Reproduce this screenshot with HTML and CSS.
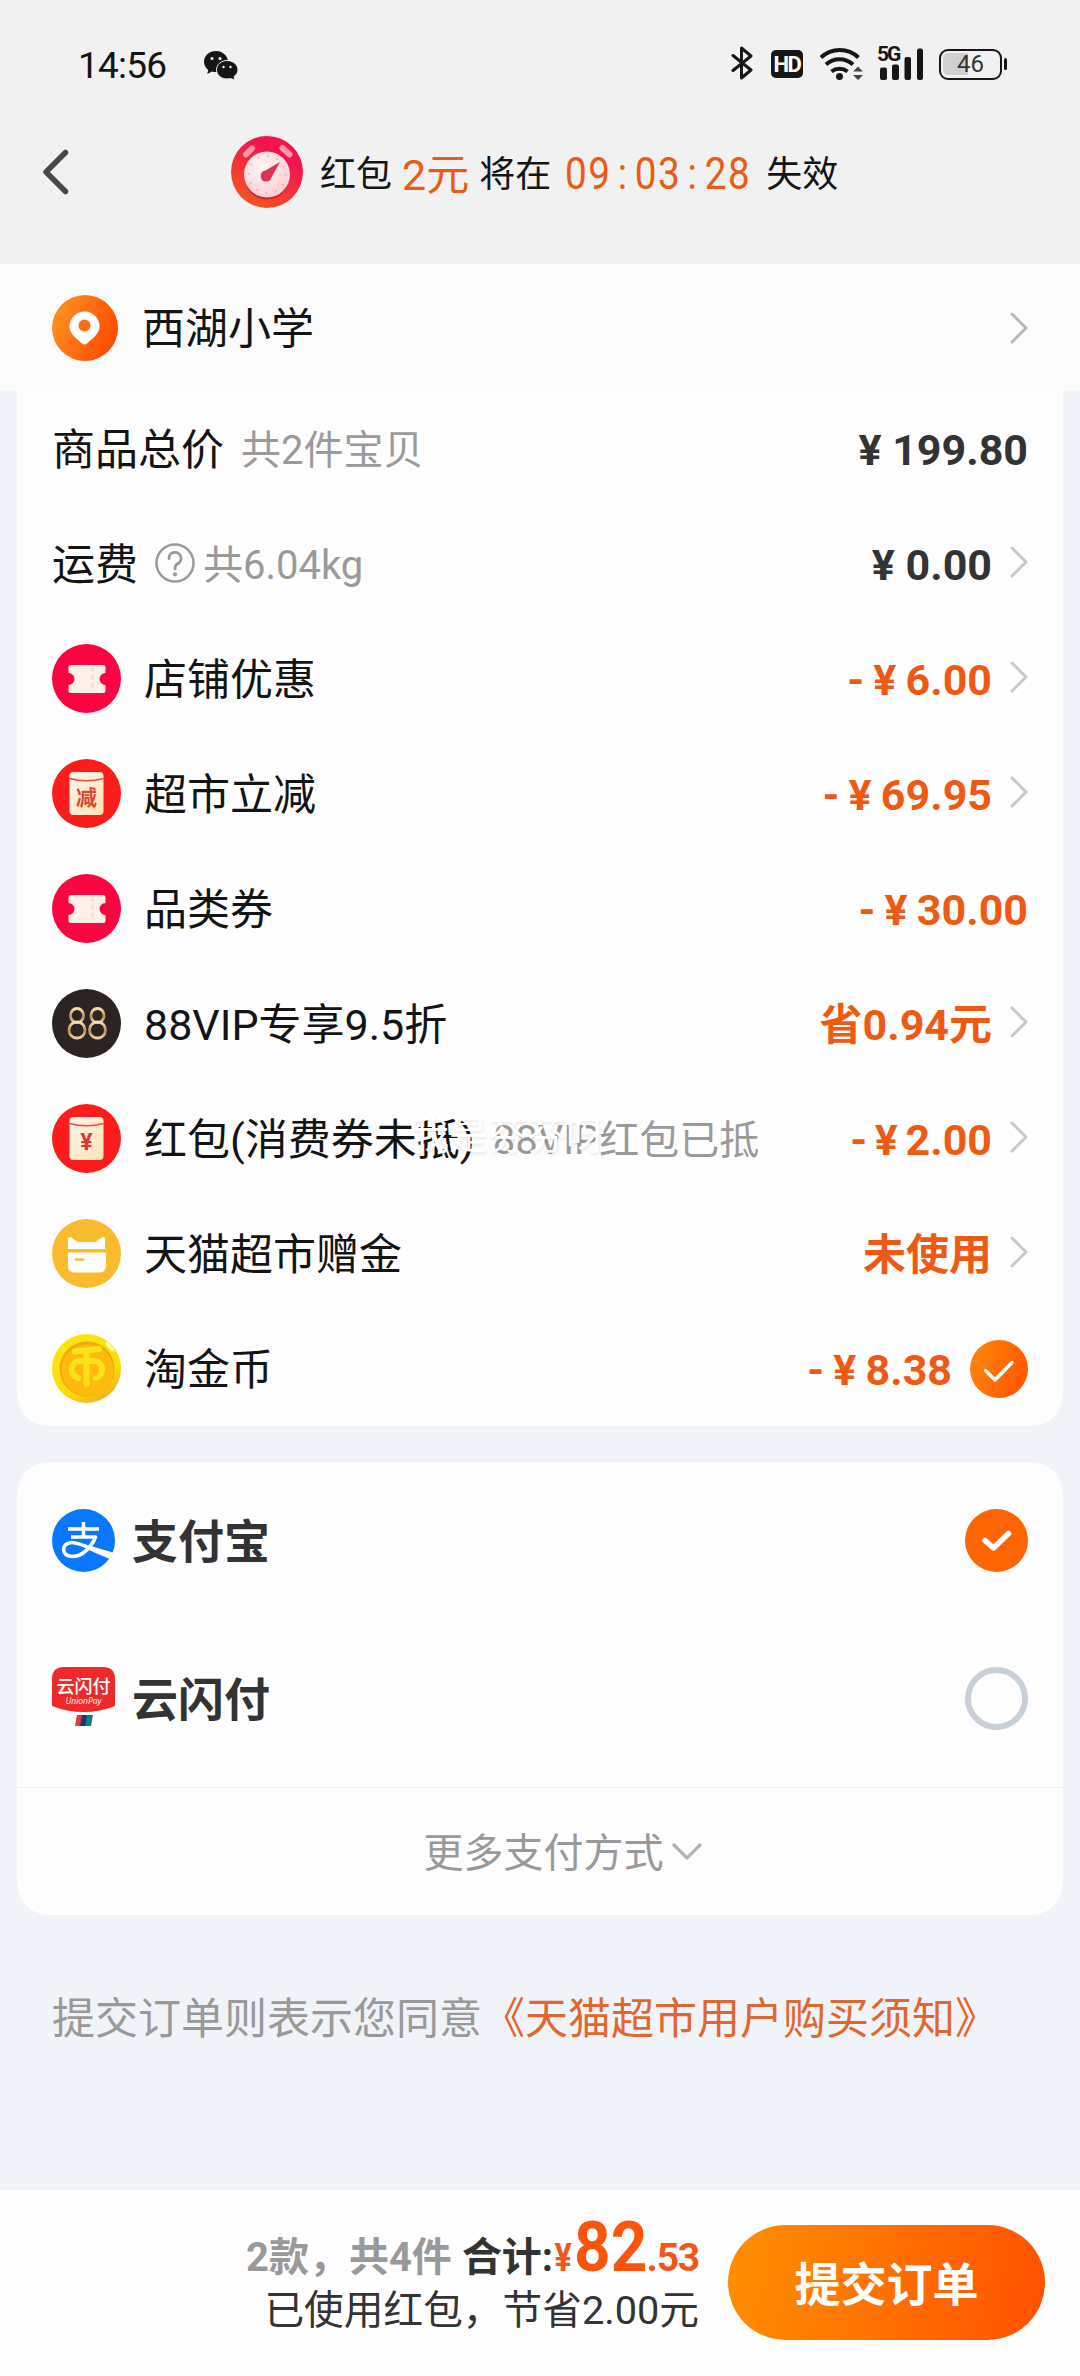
FILE: index.html
```html
<!DOCTYPE html>
<html lang="zh-CN">
<head>
<meta charset="utf-8">
<title>确认订单</title>
<link rel="stylesheet" href="styles.css">
</head>
<body>
<svg class="defs" width="0" height="0" aria-hidden="true">
  <defs>
    <linearGradient id="gOrange" x1="0" y1="0.2" x2="1" y2="0.6"><stop offset="0" stop-color="#ff9422"/><stop offset="1" stop-color="#ff4a00"/></linearGradient>
    <linearGradient id="gCheck" x1="0" y1="0" x2="1" y2="0.4"><stop offset="0" stop-color="#ff8a0a"/><stop offset="1" stop-color="#ff5a00"/></linearGradient>
    <linearGradient id="gClock" x1="0.75" y1="0.1" x2="0.25" y2="1"><stop offset="0.2" stop-color="#f1154c"/><stop offset="1" stop-color="#f4591f"/></linearGradient>
    <radialGradient id="gFace" cx="0.4" cy="0.35" r="0.7"><stop offset="0" stop-color="#fff6f4"/><stop offset="1" stop-color="#fbccd2"/></radialGradient>
    <linearGradient id="gPaper" x1="0" y1="0" x2="1" y2="1"><stop offset="0" stop-color="#fff4ea"/><stop offset="1" stop-color="#fde3b4"/></linearGradient>
    <linearGradient id="gGold" x1="0" y1="0" x2="0.6" y2="1"><stop offset="0" stop-color="#fae80a"/><stop offset="0.75" stop-color="#fbdc0a"/><stop offset="1" stop-color="#f5b41c"/></linearGradient>
    <linearGradient id="gVip" x1="0" y1="0" x2="0" y2="1"><stop offset="0" stop-color="#f6dfb8"/><stop offset="0.55" stop-color="#b98f5a"/><stop offset="1" stop-color="#ecd0a2"/></linearGradient>
  </defs>
  <symbol id="chev" viewBox="0 0 18 32"><path d="M2 2 L16 16 L2 30" fill="none" stroke="currentColor" stroke-width="3" stroke-linecap="round" stroke-linejoin="round"/></symbol>
  <symbol id="coupon" viewBox="0 0 69 69">
    <circle cx="34.5" cy="34.5" r="34.5" fill="#fb0540"/>
    <path d="M19 21H51a2.5 2.5 0 0 1 2.5 2.5V29a6 6 0 0 0 0 12V46.500a2.500 2.500 0 0 1-2.500 2.500H19a2.500 2.500 0 0 1-2.500-2.500V41a6 6 0 0 0 0-12V23.500A2.500 2.500 0 0 1 19 21Z" fill="#fff0ea"/>
    <path d="M40.500 23V47" stroke="#fcdcd5" stroke-width="3" stroke-dasharray="5 3"/>
  </symbol>
  <symbol id="packet" viewBox="0 0 69 69">
    <circle cx="34.500" cy="34.500" r="34.500" fill="#fb1d1b"/>
    <rect x="17.500" y="13" width="34" height="43" rx="4" fill="url(#gPaper)"/>
    <path d="M17.500 19.500Q34.500 24 51.500 19.500" fill="none" stroke="#f0483c" stroke-width="1.500"/>
  </symbol>
</svg>

<header class="top">
  <div class="status">
    <span class="time">14:56</span>
    <svg class="wechat" width="34" height="29" viewBox="0 0 34 29" fill="#161616">
      <path d="M12 0C5.400 0 0 4.700 0 10.700c0 3.500 1.800 6.400 4.300 8.300L3.200 23l4.700-2.600c1.300.4 2.700.5 4.100.5 6.600 0 12-4.500 12-10.200S18.600 0 12 0Z"/>
      <path d="M23 9.500c-6 0-10.500 4.200-10.500 9.300S17 28 23 28c1.300 0 2.400-.2 3.500-.5L31 29l-1-3.400c2.400-1.700 4-4 4-6.800 0-5.100-5-9.300-11-9.300Z" stroke="#f1f1f1" stroke-width="1"/>
      <g fill="#f1f1f1"><circle cx="8" cy="7.500" r="1.500"/><circle cx="16" cy="7.500" r="1.500"/><circle cx="19.500" cy="16" r="1.200"/><circle cx="26.500" cy="16" r="1.200"/></g>
    </svg>
    <div class="sys">
      <svg width="22" height="34" viewBox="0 0 22 34"><path d="M2 9.500L20 24L10.500 32V2L20 10L2 24.500" fill="none" stroke="#161616" stroke-width="3" stroke-linejoin="round" stroke-linecap="round"/></svg>
      <span class="hd">HD</span>
      <svg class="wifi" width="46" height="34" viewBox="0 0 46 34"><g fill="none" stroke="#161616" stroke-width="4"><path d="M2 11.500A27 27 0 0 1 39.500 11.500"/><path d="M7 18.500A20 20 0 0 1 34 18.500"/><path d="M12.500 25.500A13 13 0 0 1 28.500 25.500"/></g><circle cx="20.500" cy="30.500" r="3.500" fill="#161616"/><path d="M34 25.500L39 20.500L44 25.500ZM34 29L39 34L44 29Z" fill="#444"/></svg>
      <svg class="signal" width="48" height="34" viewBox="0 0 48 34"><text x="0" y="15" class="g5">5G</text><g fill="#161616"><rect x="3" y="21.500" width="7" height="12.500" rx="2"/><rect x="15" y="18.500" width="7" height="15.500" rx="2"/><rect x="27.500" y="11" width="6.500" height="23" rx="2"/><rect x="40" y="2.500" width="6" height="31.500" rx="2"/></g></svg>
      <span class="battery"><span class="level">46</span></span>
    </div>
  </div>
  <div class="notice">
    <svg class="back" width="28" height="46" viewBox="0 0 28 46"><path d="M23.500 3.500L4 23L23.500 42.500" fill="none" stroke="#48484a" stroke-width="5.500" stroke-linecap="round" stroke-linejoin="round"/></svg>
    <svg class="clock" width="72" height="72" viewBox="0 0 72 72">
      <circle cx="36" cy="36" r="36" fill="url(#gClock)"/>
      <g stroke="#fb94a6" stroke-width="6" stroke-linecap="round"><path d="M15 18.500L21 12.500"/><path d="M51.500 12L58.500 18.500"/></g>
      <circle cx="36" cy="41" r="22.500" fill="#c9252b"/>
      <circle cx="36" cy="38.500" r="23" fill="url(#gFace)"/>
      <circle cx="36" cy="38.500" r="18.500" fill="none" stroke="#ef9aa6" stroke-width="2" stroke-dasharray="1 8.690"/>
      <path d="M49 26L40.500 41.500A5.500 5.500 0 1 1 34.500 34.500Z" fill="#dc3350"/>
    </svg>
    <span class="n-text">红包</span><span class="n-amt">2元</span><span class="n-text">将在</span><span class="timer">09<i>:</i>03<i>:</i>28</span><span class="n-text">失效</span>
  </div>
</header>

<section class="address">
  <svg width="66" height="66" viewBox="0 0 66 66"><circle cx="33" cy="33" r="33" fill="url(#gOrange)"/><path d="M32.500 16.500a15 15 0 0 0-15 15c0 8 8.500 13 12.500 17q2.500 2 5 0c4-4 12.500-9 12.500-17a15 15 0 0 0-15-15Z" fill="#fff"/><circle cx="32.500" cy="30.500" r="6" fill="#ff6f12"/></svg>
  <span class="label">西湖小学</span>
  <svg class="chev strong" width="18" height="32"><use href="#chev"/></svg>
</section>

<main>
  <section class="card bill">
    <div class="row"><span class="label">商品总价</span><span class="sub s1">共2件宝贝</span><span class="val dark">¥ 199.80</span></div>
    <div class="row"><span class="label">运费</span>
      <svg class="help" width="40" height="40" viewBox="0 0 40 40"><circle cx="20" cy="20" r="18.500" fill="none" stroke="#9a9a9a" stroke-width="2.500"/><path d="M14 15.500A6 6 0 1 1 22.500 20.800Q20 22.300 20 26" fill="none" stroke="#9a9a9a" stroke-width="2.800" stroke-linecap="round"/><circle cx="20" cy="31.300" r="2.100" fill="#9a9a9a"/></svg>
      <span class="sub">共6.04kg</span><span class="val dark">¥ 0.00</span><svg class="chev" width="18" height="32"><use href="#chev"/></svg></div>
    <div class="row"><svg class="ico" width="69" height="69"><use href="#coupon"/></svg><span class="label">店铺优惠</span><span class="val">- ¥ 6.00</span><svg class="chev" width="18" height="32"><use href="#chev"/></svg></div>
    <div class="row"><svg class="ico" width="69" height="69" viewBox="0 0 69 69"><use href="#packet"/><text x="34.500" y="46" class="t-jian">减</text></svg><span class="label">超市立减</span><span class="val">- ¥ 69.95</span><svg class="chev" width="18" height="32"><use href="#chev"/></svg></div>
    <div class="row"><svg class="ico" width="69" height="69"><use href="#coupon"/></svg><span class="label">品类券</span><span class="val">- ¥ 30.00</span></div>
    <div class="row"><svg class="ico" width="69" height="69" viewBox="0 0 69 69"><circle cx="34.500" cy="34.500" r="34.500" fill="#2b2423"/><g fill="none" stroke="url(#gVip)" stroke-width="2.800"><ellipse cx="25" cy="26.500" rx="6.500" ry="7"/><ellipse cx="25" cy="41" rx="8" ry="8"/><ellipse cx="45.500" cy="26.500" rx="6.500" ry="7"/><ellipse cx="45.500" cy="41" rx="8" ry="8"/></g></svg><span class="label">88VIP专享9.5折</span><span class="val">省0.94元</span><svg class="chev" width="18" height="32"><use href="#chev"/></svg></div>
    <div class="row marked"><svg class="ico" width="69" height="69" viewBox="0 0 69 69"><use href="#packet"/><text x="34.500" y="45.500" class="t-yen">¥</text></svg><span class="label">红包(消费券未抵)</span><span class="sub s2">88VIP红包已抵</span><span class="mark">我是芬芬呀</span><span class="val tight">- ¥ 2.00</span><svg class="chev" width="18" height="32"><use href="#chev"/></svg></div>
    <div class="row"><svg class="ico" width="69" height="69" viewBox="0 0 69 69"><circle cx="34.500" cy="34.500" r="34.500" fill="#f9bc2e"/><path d="M16 30V20q0-3 3-1.500L26 23H43L50 18.500q3-1.500 3 1.500V30Z" fill="#fff"/><path d="M16 33.500H54V47.500a6 6 0 0 1-6 6H22a6 6 0 0 1-6-6Z" fill="#fff"/><path d="M24 40.500H31" stroke="#f9bc2e" stroke-width="2.500" stroke-linecap="round"/></svg><span class="label">天猫超市赠金</span><span class="val">未使用</span><svg class="chev" width="18" height="32"><use href="#chev"/></svg></div>
    <div class="row"><svg class="ico" width="69" height="69" viewBox="0 0 69 69"><circle cx="34.500" cy="34.500" r="34.500" fill="url(#gGold)"/><circle cx="35" cy="35" r="27.500" fill="#f1a70f"/><circle cx="35.500" cy="36" r="26" fill="#fdb90d"/><g fill="none" stroke="#fbe118" stroke-width="6" stroke-linecap="round" stroke-linejoin="round"><path d="M23 17.500L47 15"/><path d="M34.500 17V50"/><path d="M26 44C17 41 18 28 27 27H43C52 28 53 41 44 44"/></g><path d="M55 9.500L60.500 15.500" stroke="#fff" stroke-width="3.500" stroke-linecap="round" opacity=".7"/></svg><span class="label">淘金币</span><span class="val coin">- ¥ 8.38</span>
      <svg class="check" width="58" height="58" viewBox="0 0 58 58"><circle cx="29" cy="29" r="29" fill="url(#gCheck)"/><path d="M15.500 30.500L25 40L42 22.500" fill="none" stroke="#fff" stroke-width="3.500" stroke-linecap="round" stroke-linejoin="round"/></svg></div>
  </section>

  <section class="card pay">
    <div class="method"><svg width="63" height="63" viewBox="0 0 63 63"><circle cx="31.500" cy="31.500" r="31.500" fill="#0877fd"/><g fill="none" stroke="#fff" stroke-width="3.600"><path d="M16 20H47"/><path d="M31.500 13V27"/><path d="M19 28H43.500C40 37 31 47.500 20.500 47.500C8.500 47.500 9 33.500 20 33.500C28 33.500 41 41 60 47.500" stroke-linejoin="round"/></g><path d="M37 36.500L61 43.500L58 50Q46 45.500 34 39.500Z" fill="#fff"/></svg><span class="m-name">支付宝</span>
      <svg class="check" width="63" height="63" viewBox="0 0 63 63"><circle cx="31.500" cy="31.500" r="31.500" fill="#ff6402"/><path d="M20 31.500L28.500 39L43.500 24.500" fill="none" stroke="#fff" stroke-width="5.500" stroke-linecap="round" stroke-linejoin="round"/></svg></div>
    <div class="method second"><svg width="63" height="63" viewBox="0 0 63 63"><path d="M12 0H51Q63 0 63 12V39Q48 45 31.500 45T0 39V12Q0 0 12 0Z" fill="#ef2929"/><text x="31.500" y="26" class="t-ysf">云闪付</text><text x="31.500" y="37" class="t-up">UnionPay</text><path d="M25 48H31L29 59H23Z" fill="#e23640"/><path d="M30 48H36L34 59H28Z" fill="#123a6d"/><path d="M35 48H41L39 59H33Z" fill="#0b7f83"/></svg><span class="m-name">云闪付</span><span class="radio"></span></div>
    <div class="more"><span>更多支付方式</span><svg width="30" height="18" viewBox="0 0 30 18"><path d="M2 2L15 15L28 2" fill="none" stroke="#b4b4b4" stroke-width="3.200" stroke-linecap="round" stroke-linejoin="round"/></svg></div>
  </section>

  <p class="agree">提交订单则表示您同意<a>《天猫超市用户购买须知》</a></p>
</main>

<footer class="bar">
  <div class="sum">
    <div class="total"><span class="cnt">2款，共4件</span><span class="heji">合计:</span><span class="cur">¥</span><span class="big">82</span><span class="dec">.53</span></div>
    <div class="saved">已使用红包，节省2.00元</div>
  </div>
  <button class="submit">提交订单</button>
</footer>
</body>
</html>
```
FILE: styles.css
```css
* { box-sizing: border-box; }
body {
  margin: 0;
  width: 1080px;
  height: 2376px;
  display: flex;
  flex-direction: column;
  background: #f0f4f8;
  color: #141414;
  font-family: Roboto, "Noto Sans CJK SC", sans-serif;
  line-height: 1;
  white-space: nowrap;
  overflow: hidden;
}
svg { display: block; flex: none; }
.defs { position: absolute; }

.top { height: 264px; flex: none; background: #f1f1f1; }
.status { height: 130px; padding: 0 78px; display: flex; align-items: center; }
.time { font-size: 37px; letter-spacing: -0.8px; width: 126px; }
.sys { margin-left: auto; display: flex; align-items: center; height: 34px; margin-top: -4px; }
.hd {
  width: 32px; height: 28px; margin: 2px 0 0 18px;
  border-radius: 5px; background: #161616; color: #fff;
  font-size: 22px; font-weight: 700; line-height: 29px; text-align: center; letter-spacing: -1.5px;
}
.wifi { margin-left: 16px; }
.signal { margin-left: 12px; overflow: visible; }
.g5 { font: 700 21px Roboto, sans-serif; letter-spacing: -2px; fill: #161616; }
.battery {
  position: relative; width: 63px; height: 31px; margin: 2px 0 0 14px;
  border: 2.5px solid #161616; border-radius: 9px; padding: 2px;
}
.battery::after {
  content: ""; position: absolute; right: -7px; top: 7px;
  width: 3px; height: 12px; background: #161616; border-radius: 2px;
}
.level {
  display: block; height: 22px; border-radius: 5px;
  background: linear-gradient(90deg, #d0d0d0 46%, transparent 46%);
  font-size: 24px; line-height: 23px; text-align: center; color: #333;
}
.notice { height: 88px; display: flex; align-items: center; }
.back { margin-left: 42px; margin-right: 161px; margin-top: -4px; }
.clock { margin-right: 17px; margin-top: -4px; }
.n-text { font-size: 36px; padding-top: 2px; }
.n-amt { font-size: 43px; color: #e85c17; margin: 0 10px 0 10px; padding-top: 2px; }
.timer {
  width: 187px; margin: 0 14px 0 14px; font-size: 45px; letter-spacing: 1.8px; color: #e85c17;
  padding-bottom: 2px;
  transform: scaleX(.86); transform-origin: 0 50%;
}
.timer i { font-style: normal; display: inline-block; width: 27px; text-align: center; }

.address { height: 127px; flex: none; background: #fbfbfb; padding: 0 52px; display: flex; align-items: center; }
.label { font-size: 43px; padding-top: 4px; }
.address .label { margin-left: 24px; }
.chev { color: #c8c8c8; margin-left: 18px; }
.row .chev { margin-top: -3px; }
.chev.strong { color: #b9b9b9; margin-left: auto; }

.card { margin: 0 17px; background: #fefefe; border-radius: 32px; }
.bill { border-radius: 0 0 32px 32px; }
.row { height: 115px; padding: 0 35px; display: flex; align-items: center; }
.ico { margin-right: 23px; }
.sub { font-size: 40px; color: #9a9a9a; padding-top: 4px; }
.s1 { margin-left: 17px; }
.s2 { margin-left: 18px; }
.help { margin: -2px 8px 0 17px; }
.val { margin-left: auto; padding-top: 3px; font-size: 43px; font-weight: 700; color: #ee5a14; word-spacing: -1.5px; }
.val.dark { color: #333; word-spacing: 0; }
.val.tight { word-spacing: -3px; }
.marked { position: relative; }
.mark {
  position: absolute; left: 393px; top: 36px; font-size: 39px; color: #fff;
  text-shadow: 1px 2px 3px rgba(0, 0, 0, .09);
}
.check { margin-left: auto; }
.coin + .check { margin-left: 18px; }

.pay { margin-top: 36px; height: 453px; display: flex; flex-direction: column; }
.method { height: 157px; padding: 0 35px; display: flex; align-items: center; }
.method.second { height: 159px; }
.m-name { margin-left: 17px; padding-top: 2px; font-size: 46px; font-weight: 700; color: #333; }
.radio { margin-left: auto; width: 63px; height: 63px; border: 6px solid #c9cfd8; border-radius: 50%; }
.more {
  margin-top: auto; height: 128px; border-top: 1px solid #f0f0f0;
  display: flex; align-items: center; justify-content: center; gap: 8px;
  padding-left: 45px; font-size: 40px; color: #999;
}
.more span { padding-top: 5px; }
.agree { margin: 83px 0 0 52px; font-size: 43px; color: #999; }
.agree a { color: #e0672f; }

.bar { margin-top: auto; height: 186px; flex: none; background: #fefefe; padding: 0 35px; display: flex; justify-content: flex-end; }
.sum { display: flex; flex-direction: column; align-items: flex-end; margin-right: 29px; }
.total { display: flex; align-items: baseline; height: 101px; padding-top: 21px; font-size: 40px; font-weight: 700; }
.cnt { color: #999; }
.heji { color: #333; margin-left: 10px; }
.cur { color: #f0571a; font-size: 38px; transform: scaleX(.85); }
.big { color: #f9550d; font-size: 71px; width: 73px; transform: scaleX(.9); transform-origin: 0 50%; }
.dec { color: #f0571a; font-size: 39px; letter-spacing: -1.2px; }
.saved { font-size: 39.7px; color: #333; }
.submit {
  width: 317px; height: 115px; margin-top: 35px; border: 0; border-radius: 58px; padding: 0 0 3px;
  background: linear-gradient(100deg, #ff9000, #ff5000);
  color: #fff; font: 700 46px Roboto, "Noto Sans CJK SC", sans-serif;
}

.t-jian { font: 700 21px "Noto Sans CJK SC", sans-serif; fill: #e0432f; text-anchor: middle; }
.t-yen { font: 700 23px Roboto, sans-serif; fill: #e5332c; text-anchor: middle; }
.t-ysf { font: 500 18px "Noto Sans CJK SC", sans-serif; fill: #fff; text-anchor: middle; }
.t-up { font: italic 8.5px "Open Sans", sans-serif; fill: #fff; text-anchor: middle; }
```
